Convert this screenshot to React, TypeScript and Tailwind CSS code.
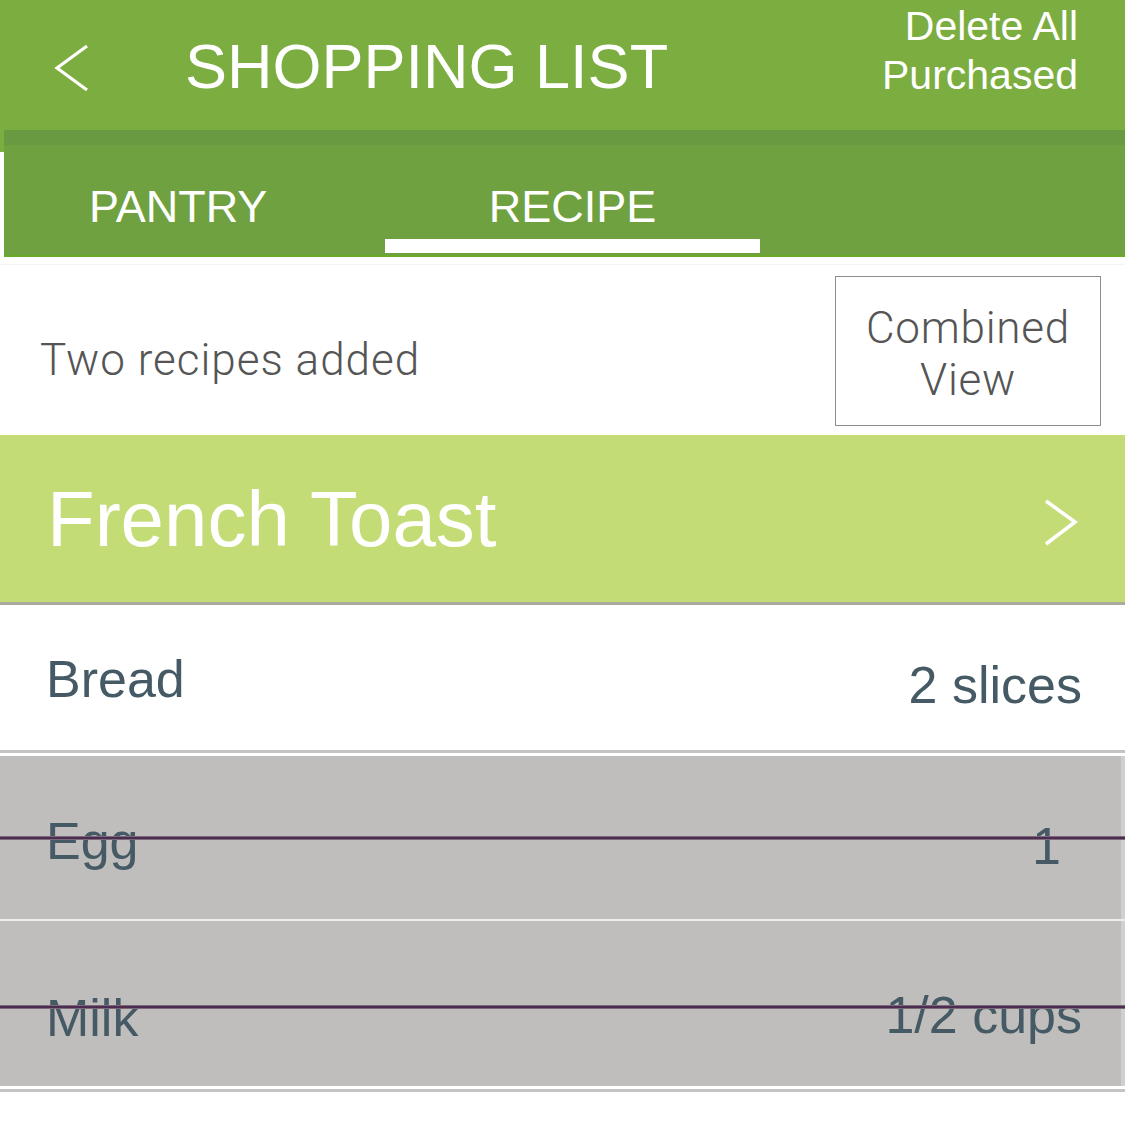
import React from "react";

const sans = { fontFamily: '"Liberation Sans", Arial, sans-serif' };
const light = { fontFamily: 'Roboto, "Liberation Sans", sans-serif' };

function ChevronLeft() {
  return (
    <svg width="40" height="56" viewBox="0 0 40 56" className="block">
      <polyline points="33,3 3,25 33,47" fill="none" stroke="white" strokeWidth="3.2" />
    </svg>
  );
}

function ChevronRight() {
  return (
    <svg width="34" height="48" viewBox="0 0 34 48" className="block">
      <polyline points="2,2 31,23 2,45" fill="none" stroke="white" strokeWidth="3.6" />
    </svg>
  );
}

function Strike({ top }: { top: string }) {
  return (
    <div className={`absolute left-0 -right-[4px] ${top} h-[4px] bg-[#4e2b50] border-y border-[#7b6a7a]`} />
  );
}

export default function App() {
  return (
    <div className="w-[1125px] h-[1125px] bg-white overflow-hidden relative" style={sans}>
      {/* Header */}
      <div className="h-[130px] bg-[#7cad40] flex text-white">
        <div className="pl-[54px] pt-[43px] w-[185px]">
          <ChevronLeft />
        </div>
        <div className="pt-[35px] text-[63px] leading-none flex-1">SHOPPING LIST</div>
        <div className="pr-[47px] pt-[2px] text-right text-[41px] leading-[49px]">
          <div>Delete All</div>
          <div>Purchased</div>
        </div>
      </div>
      {/* Tab area */}
      <div className="flex">
        <div className="w-[4px] flex flex-col">
          <div className="h-[22px] bg-[#7cad40]" />
        </div>
        <div className="flex-1">
          <div className="h-[15px] bg-[#699a41]" />
          <div className="h-[112px] bg-[#6fa141] border-b-[2px] border-[#6aab2a] flex text-white">
            <div className="w-[381px] pl-[85px] pt-[39px] text-[45px] leading-none">PANTRY</div>
            <div className="w-[375px] flex flex-col items-center">
              <div className="pt-[39px] text-[45px] leading-none">RECIPE</div>
              <div className="mt-[10px] h-[14px] w-full bg-white" />
            </div>
          </div>
        </div>
      </div>
      {/* Summary row */}
      <div className="h-[178px] border-t border-[#f3f3ef] mt-[7px] -mb-[7px] flex justify-between">
        <div className="pl-[40px] pt-[73px] text-[44px] leading-none font-light tracking-[1px] text-[#555555]" style={light}>
          Two recipes added
        </div>
        <div className="mr-[24px] mt-[11px] w-[266px] h-[150px] border border-[#8c8c8c] pt-[25px] text-center text-[44px] leading-[52px] font-light tracking-[0.75px] text-[#555555]" style={light}>
          <div>Combined</div>
          <div>View</div>
        </div>
      </div>
      {/* Recipe header */}
      <div className="h-[170px] bg-[#c3dc76] border-b-[3px] border-[#a9ab9f] flex justify-between text-white">
        <div className="pl-[47px] pt-[45px] text-[78px] leading-none">French Toast</div>
        <div className="pr-[47px] pt-[64px]">
          <ChevronRight />
        </div>
      </div>
      {/* Bread */}
      <div className="h-[145px] flex justify-between text-[#455a64] text-[52px] leading-none">
        <div className="pl-[46px] pt-[48px]">Bread</div>
        <div className="pr-[43px] pt-[54px]">2 slices</div>
      </div>
      <div className="h-[3px] bg-[#c4c4c4]" />
      <div className="h-[3px] bg-white" />
      {/* Egg */}
      <div className="relative h-[163px] bg-[#bfbebc] border-r-[4px] border-[#d0d0d0] flex justify-between text-[#455a64] text-[52px] leading-none">
        <div className="pl-[46px] pt-[59px]">Egg</div>
        <div className="pr-[60px] pt-[64px]">1</div>
        <Strike top="top-[80px]" />
      </div>
      <div className="h-[2px] bg-[#ececec]" />
      {/* Milk */}
      <div className="relative h-[165px] bg-[#bfbebc] border-r-[4px] border-[#d0d0d0] flex justify-between text-[#455a64] text-[52px] leading-none">
        <div className="pl-[46px] pt-[71px]">Milk</div>
        <div className="pr-[39px] pt-[68px]">1/2 cups</div>
        <Strike top="top-[84px]" />
      </div>
      <div className="h-[3px] bg-white" />
      <div className="h-[3px] bg-[#c4c4c4]" />
    </div>
  );
}
